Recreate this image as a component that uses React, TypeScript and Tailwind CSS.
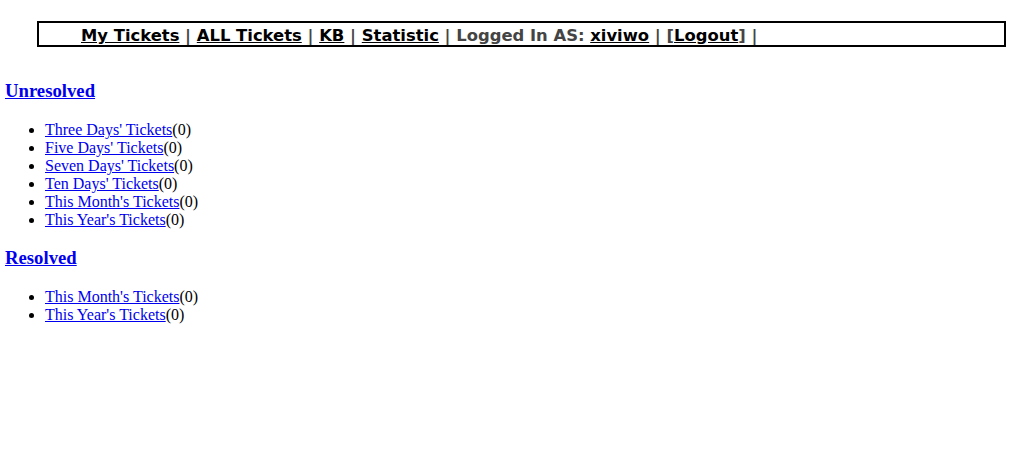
const unresolved = [
  "Three Days' Tickets",
  "Five Days' Tickets",
  "Seven Days' Tickets",
  "Ten Days' Tickets",
  "This Month's Tickets",
  "This Year's Tickets",
]

const resolved = ["This Month's Tickets", "This Year's Tickets"]

function NavLink({ children }: { children: string }) {
  return (
    <a href="#" className="text-black underline">
      {children}
    </a>
  )
}

function Sep() {
  return <span className="text-[#444]"> | </span>
}

function TicketList({ items }: { items: string[] }) {
  return (
    <ul className="list-disc pl-10 mt-4 mb-[15px]">
      {items.map((item) => (
        <li key={item} className="leading-[18px]">
          <a href="#" className="text-[#0000ee] underline">
            {item}
          </a>
          (0)
        </li>
      ))}
    </ul>
  )
}

export default function App() {
  return (
    <div className="min-h-[460px] bg-white px-[5px] pt-[21px] font-['Liberation_Serif',serif] text-[16px] text-black">
      {/* top navigation */}
      <div className="ml-[32px] mr-[23px] flex h-[26px] items-center border-2 border-black pl-[42px] pt-[4px] font-['DejaVu_Sans',sans-serif] text-[16.4px] font-bold whitespace-pre">
        <NavLink>My Tickets</NavLink>
        <Sep />
        <NavLink>ALL Tickets</NavLink>
        <Sep />
        <NavLink>KB</NavLink>
        <Sep />
        <NavLink>Statistic</NavLink>
        <span className="text-[#444]"> | Logged In AS: </span>
        <NavLink>xiviwo</NavLink>
        <span className="text-[#444]"> | [</span>
        <NavLink>Logout</NavLink>
        <span className="text-[#444]">] | </span>
      </div>

      <h3 className="mt-[30px] text-[18.72px] font-bold">
        <a href="#" className="text-[#0000ee] underline">
          Unresolved
        </a>
      </h3>
      <TicketList items={unresolved} />

      <h3 className="mt-[15px] text-[18.72px] font-bold">
        <a href="#" className="text-[#0000ee] underline">
          Resolved
        </a>
      </h3>
      <TicketList items={resolved} />
    </div>
  )
}
